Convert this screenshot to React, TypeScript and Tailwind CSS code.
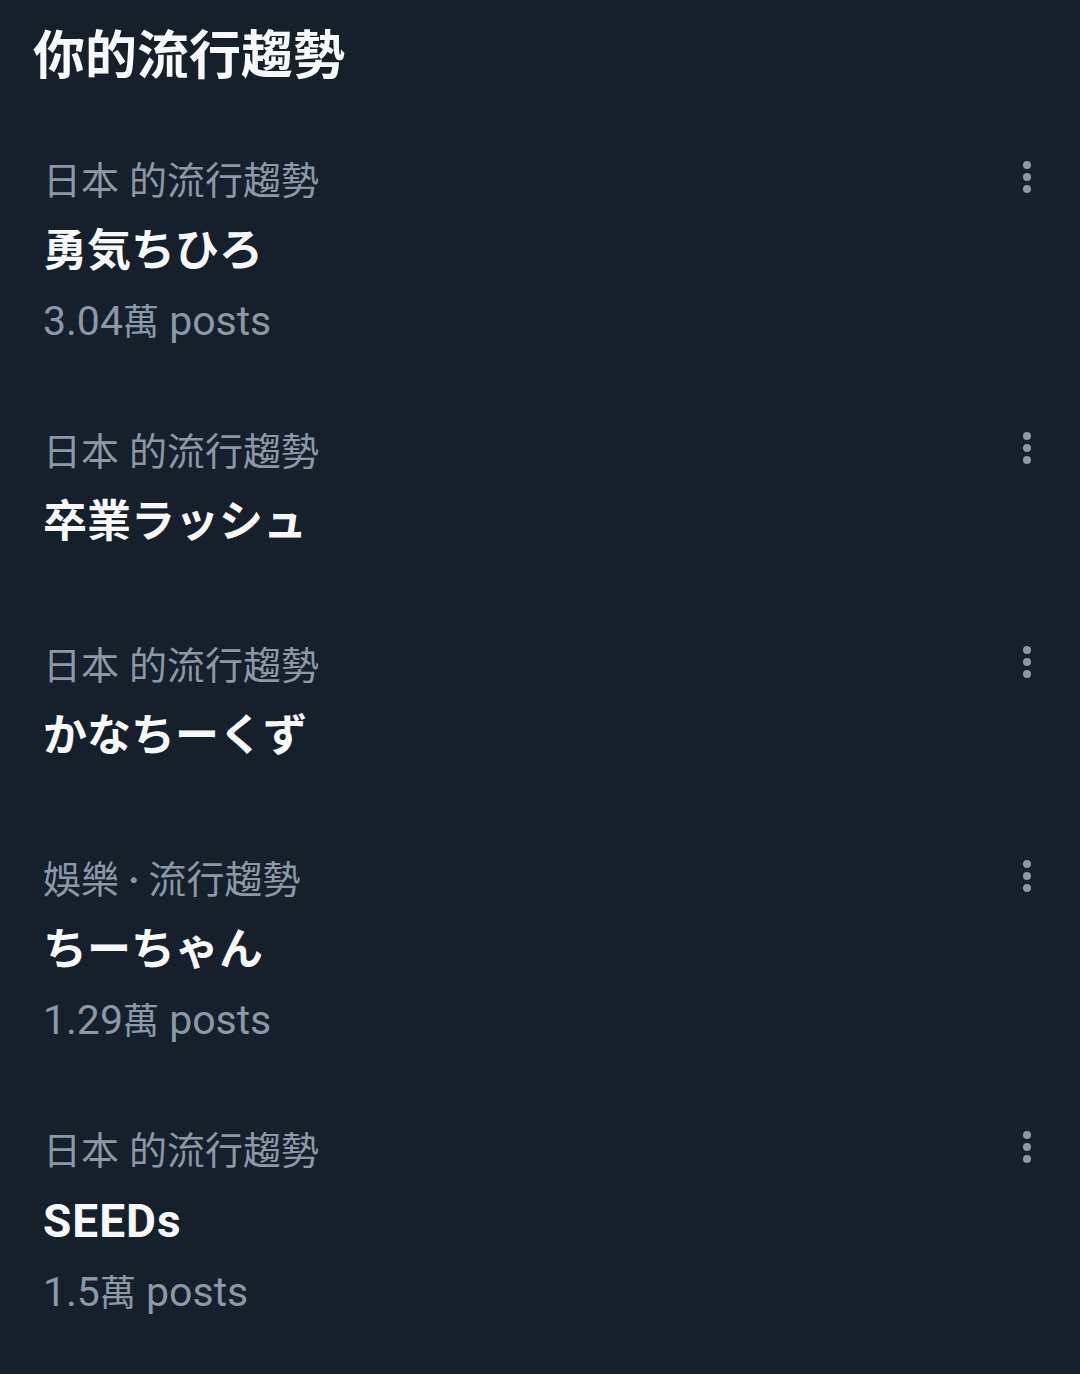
import React from "react";

type Trend = {
  category: React.ReactNode;
  title: React.ReactNode;
  posts?: React.ReactNode;
};

const font = { fontFamily: "Roboto, 'Noto Sans CJK TC', 'Noto Sans CJK JP', sans-serif" };

const japan = (
  <>
    日本<span className="inline-block w-[10px]" />的流行趨勢
  </>
);

const trends: Trend[] = [
  {
    category: japan,
    title: "勇気ちひろ",
    posts: (
      <>
        3.04<span className="text-[36px]">萬</span> posts
      </>
    ),
  },
  { category: japan, title: "卒業ラッシュ" },
  { category: japan, title: "かなちーくず" },
  {
    category: (
      <>
        娛樂<span className="mx-[9px] font-bold">·</span>流行趨勢
      </>
    ),
    title: "ちーちゃん",
    posts: (
      <>
        1.29<span className="text-[36px]">萬</span> posts
      </>
    ),
  },
  {
    category: japan,
    title: <span className="text-[46px] tracking-[1px]">SEEDs</span>,
    posts: (
      <>
        1.5<span className="text-[36px]">萬</span> posts
      </>
    ),
  },
];

function Dots() {
  return (
    <div className="mb-[8px] flex flex-col items-center gap-[4px]">
      <span className="block h-[8px] w-[8px] rounded-full bg-[#8b98a5]" />
      <span className="block h-[8px] w-[8px] rounded-full bg-[#8b98a5]" />
      <span className="block h-[8px] w-[8px] rounded-full bg-[#8b98a5]" />
    </div>
  );
}

export default function App() {
  return (
    <div className="min-h-[1374px] w-[1080px] bg-[#15202b] pt-[22px]" style={font}>
      <h1 className="pl-[33px] text-[52px] font-bold leading-[70px] text-[#f7f9f9]">你的流行趨勢</h1>
      <div className="mt-[26px] flex flex-col">
        {trends.map((t, i) => (
          <div
            key={i}
            className={`pl-[43px] pr-[49px] pt-[28px] ${t.posts ? "pb-[31px]" : "pb-[46px]"}`}
          >
            <div className="flex h-[70px] items-center justify-between">
              <div className="text-[38px] leading-[70px] text-[#8b98a5]">{t.category}</div>
              <Dots />
            </div>
            <div className="text-[44px] font-bold leading-[70px] text-[#f7f9f9]">{t.title}</div>
            {t.posts && (
              <div className="text-[41px] leading-[70px] text-[#8b98a5]">{t.posts}</div>
            )}
          </div>
        ))}
      </div>
    </div>
  );
}
